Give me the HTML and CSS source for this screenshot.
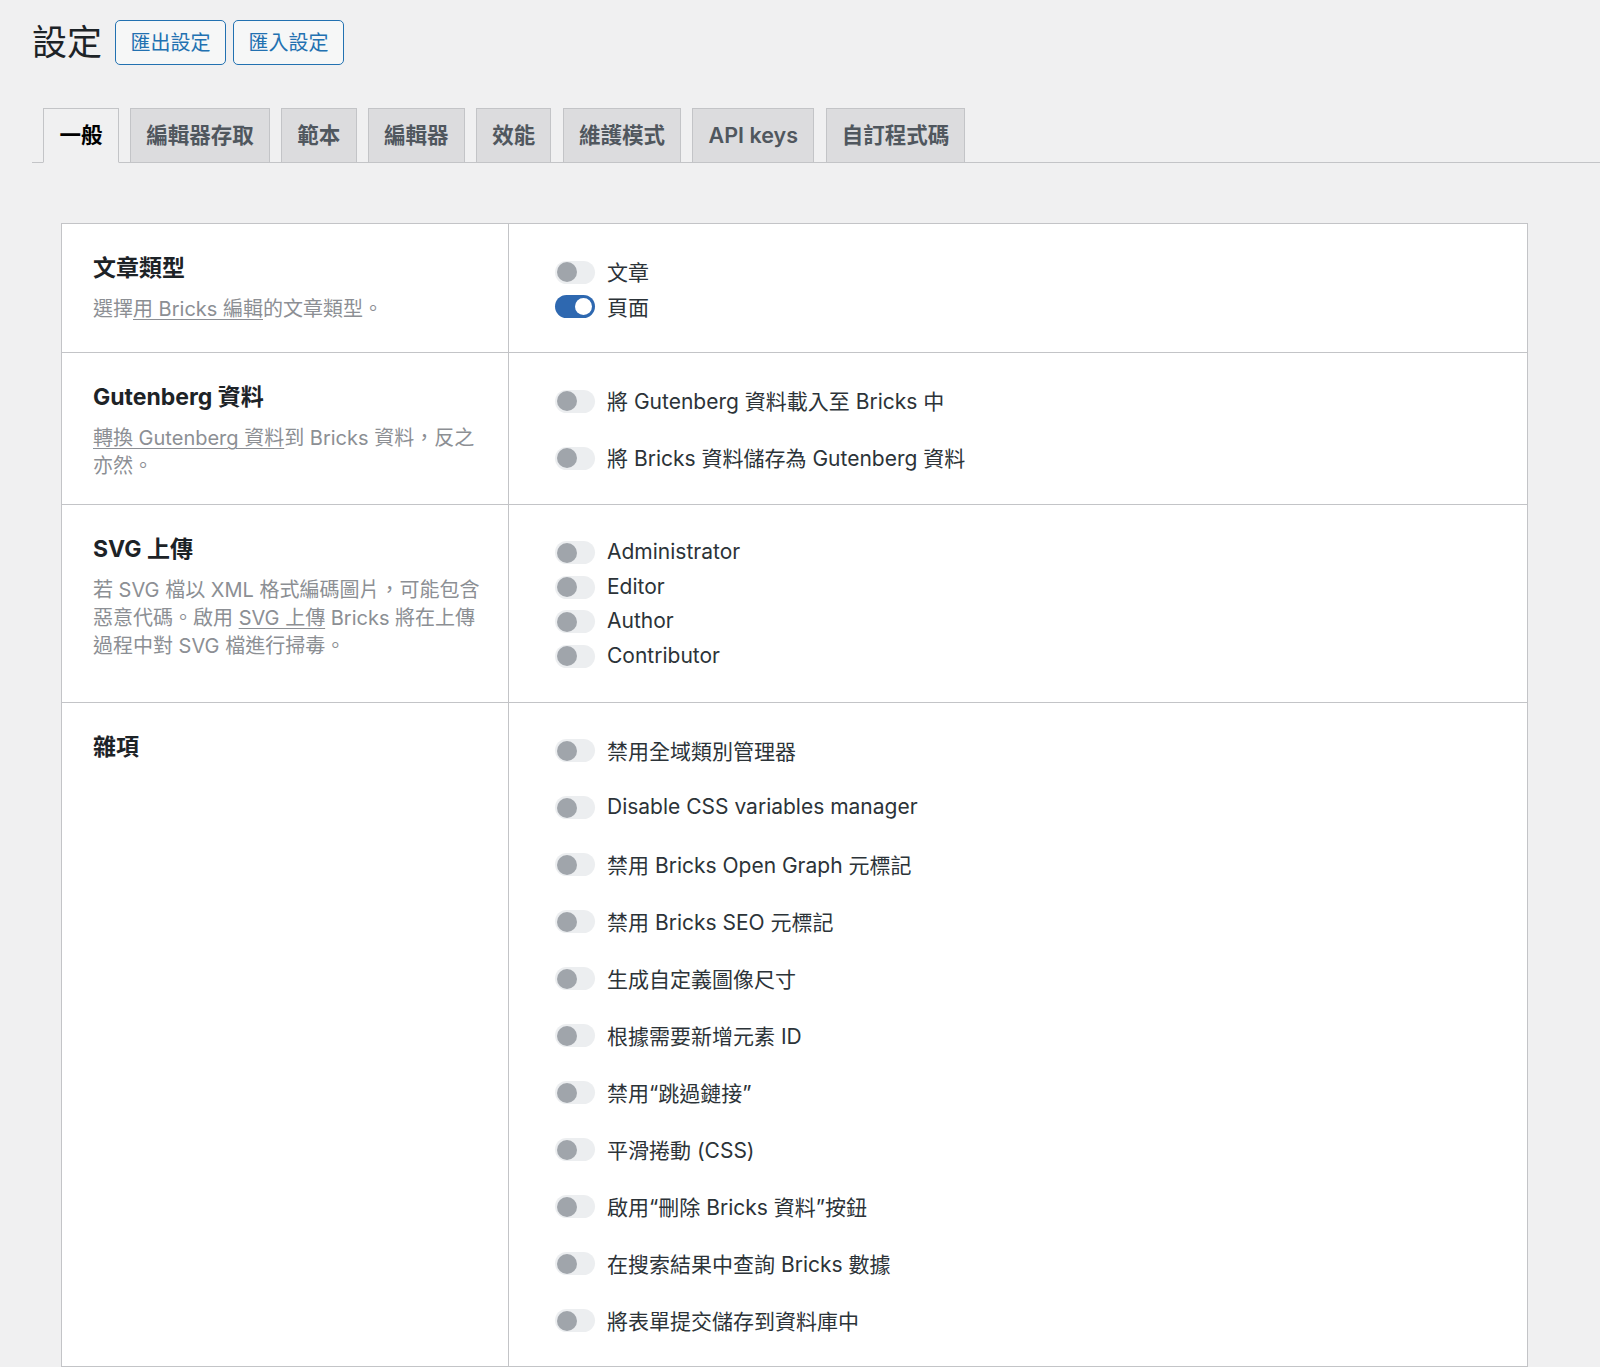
FILE: index.html
```html
<!DOCTYPE html>
<html lang="zh-Hant">
<head>
<meta charset="utf-8">
<title>設定</title>
<link rel="stylesheet" href="styles.css">
</head>
<body>
<div class="wrap">
  <div class="page-head">
    <h1 class="page-title">設定</h1>
    <a class="title-btn" href="#">匯出設定</a>
    <a class="title-btn" href="#">匯入設定</a>
  </div>

  <nav class="tabs">
    <a class="tab active" href="#">一般</a>
    <a class="tab" href="#">編輯器存取</a>
    <a class="tab" href="#">範本</a>
    <a class="tab" href="#">編輯器</a>
    <a class="tab" href="#">效能</a>
    <a class="tab" href="#">維護模式</a>
    <a class="tab" href="#">API keys</a>
    <a class="tab" href="#">自訂程式碼</a>
  </nav>

  <div class="settings">
    <section class="row">
      <div class="label-cell">
        <h3 class="row-title">文章類型</h3>
        <p class="row-desc">選擇<a href="#">用 Bricks 編輯</a>的文章類型。</p>
      </div>
      <div class="ctrl-cell">
        <label class="opt"><span class="toggle"></span>文章</label>
        <label class="opt"><span class="toggle on"></span>頁面</label>
      </div>
    </section>

    <section class="row">
      <div class="label-cell">
        <h3 class="row-title">Gutenberg 資料</h3>
        <p class="row-desc"><a href="#">轉換 Gutenberg 資料</a>到 Bricks 資料，反之亦然。</p>
      </div>
      <div class="ctrl-cell spaced">
        <label class="opt"><span class="toggle"></span>將 Gutenberg 資料載入至 Bricks 中</label>
        <label class="opt"><span class="toggle"></span>將 Bricks 資料儲存為 Gutenberg 資料</label>
      </div>
    </section>

    <section class="row">
      <div class="label-cell">
        <h3 class="row-title">SVG 上傳</h3>
        <p class="row-desc">若 SVG 檔以 XML 格式編碼圖片，可能包含惡意代碼。啟用 <a href="#">SVG 上傳</a> Bricks 將在上傳過程中對 SVG 檔進行掃毒。</p>
      </div>
      <div class="ctrl-cell">
        <label class="opt"><span class="toggle"></span>Administrator</label>
        <label class="opt"><span class="toggle"></span>Editor</label>
        <label class="opt"><span class="toggle"></span>Author</label>
        <label class="opt"><span class="toggle"></span>Contributor</label>
      </div>
    </section>

    <section class="row">
      <div class="label-cell">
        <h3 class="row-title">雜項</h3>
      </div>
      <div class="ctrl-cell spaced">
        <label class="opt"><span class="toggle"></span>禁用全域類別管理器</label>
        <label class="opt"><span class="toggle"></span>Disable CSS variables manager</label>
        <label class="opt"><span class="toggle"></span>禁用 Bricks Open Graph 元標記</label>
        <label class="opt"><span class="toggle"></span>禁用 Bricks SEO 元標記</label>
        <label class="opt"><span class="toggle"></span>生成自定義圖像尺寸</label>
        <label class="opt"><span class="toggle"></span>根據需要新增元素 ID</label>
        <label class="opt"><span class="toggle"></span>禁用“跳過鏈接”</label>
        <label class="opt"><span class="toggle"></span>平滑捲動 (CSS)</label>
        <label class="opt"><span class="toggle"></span>啟用“刪除 Bricks 資料”按鈕</label>
        <label class="opt"><span class="toggle"></span>在搜索結果中查詢 Bricks 數據</label>
        <label class="opt"><span class="toggle"></span>將表單提交儲存到資料庫中</label>
      </div>
    </section>
  </div>
</div>
</body>
</html>
```

FILE: styles.css
```css
html, body {
  margin: 0;
  padding: 0;
  background: #f0f0f1;
}

body {
  font-family: Inter, "Noto Sans CJK TC", sans-serif;
  color: #1d2327;
  overflow: hidden;
}

.wrap {
  padding: 20px 0 0 32px;
}

/* header */
.page-head {
  display: flex;
  align-items: center;
  height: 45px;
}

.page-title {
  margin: 0 13px 0 0;
  font-size: 35px;
  font-weight: 400;
  line-height: 45px;
  color: #1d2327;
}

.title-btn {
  box-sizing: border-box;
  display: inline-block;
  height: 45px;
  margin-right: 7px;
  padding: 2px 14.5px 0;
  border: 1.5px solid #2271b1;
  border-radius: 5px;
  background: #f6f7f7;
  color: #2271b1;
  font-size: 20px;
  line-height: 40px;
  text-decoration: none;
}

/* tabs */
.tabs {
  display: flex;
  margin-top: 43px;
  border-bottom: 1px solid #c3c4c7;
}

.tab {
  box-sizing: border-box;
  height: 54px;
  margin-left: 11.3px;
  padding: 0 15.2px;
  border: 1px solid #c3c4c7;
  border-bottom: none;
  background: #dcdcde;
  color: #50575e;
  font-size: 21.5px;
  font-weight: 600;
  line-height: 52px;
  text-decoration: none;
  white-space: nowrap;
}

.tab.active {
  height: 55px;
  margin-bottom: -1px;
  background: #f0f0f1;
  border-bottom: 1px solid #f0f0f1;
  color: #000;
}

/* settings table */
.settings {
  margin: 60px 72px 0 29px;
  border: 1px solid #c3c4c7;
  background: #fff;
}

.row {
  display: grid;
  grid-template-columns: 447px 1fr;
  border-top: 1px solid #c3c4c7;
}

.row:first-child {
  border-top: none;
}

.label-cell {
  border-right: 1px solid #c3c4c7;
  padding: 31px 28px 18px 31px;
}

.row-title {
  margin: 0;
  font-size: 23px;
  font-weight: 700;
  line-height: 27px;
  color: #1d2327;
}

.row-desc {
  margin: 13px 0 0;
  font-size: 20px;
  line-height: 28px;
  color: #8c8f94;
}

.row-desc a {
  color: #8c8f94;
  text-decoration: underline;
  text-underline-offset: 3px;
  text-decoration-thickness: 1px;
}

.ctrl-cell {
  display: flex;
  flex-direction: column;
  padding: 31px 0 28px 46px;
}

.ctrl-cell.spaced {
  gap: 22.5px;
}

.opt {
  box-sizing: border-box;
  display: flex;
  align-items: center;
  height: 34.5px;
  padding-bottom: 2px;
  font-size: 21px;
  color: #2c3338;
  white-space: nowrap;
}

/* toggle switch */
.toggle {
  position: relative;
  flex: none;
  width: 40px;
  height: 23px;
  margin: 2px 12px 0 0;
  border-radius: 12px;
  background: #eceef0;
}

.toggle::after {
  content: "";
  position: absolute;
  top: 1.5px;
  left: 1.5px;
  width: 20px;
  height: 20px;
  border-radius: 50%;
  background: #a0a5ab;
}

.toggle.on {
  background: #2e68b0;
}

.toggle.on::after {
  top: 3px;
  left: auto;
  right: 3px;
  width: 17px;
  height: 17px;
  background: #fff;
}
```
